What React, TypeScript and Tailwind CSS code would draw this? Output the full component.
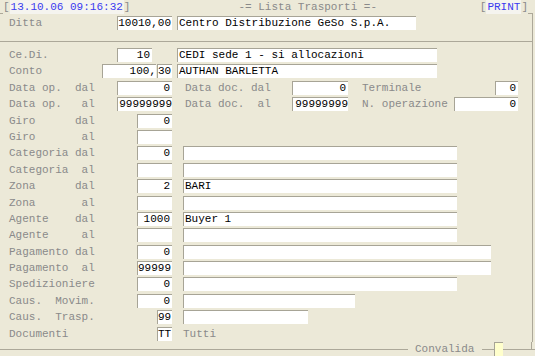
import { ReactNode } from 'react';

interface BoxProps {
  className: string;
  children?: ReactNode;
}

// white entry field with sunken top/left edge
function Box({ className, children }: BoxProps) {
  return (
    <div
      className={
        'h-[14px] shrink-0 bg-white border-t border-l border-[#a7a496] leading-[13px] whitespace-pre overflow-hidden text-black ' +
        className
      }
    >
      {children}
    </div>
  );
}

function Label({ className, children }: BoxProps) {
  return (
    <span className={'shrink-0 whitespace-pre leading-[14px] text-[#8a8a8a] ' + className}>
      {children}
    </span>
  );
}

function Row({ children }: { children: ReactNode }) {
  return <div className="flex items-start h-[16.4px] pl-[9px]">{children}</div>;
}

export default function App() {
  return (
    <div className="w-[535px] h-[356px] bg-[#ece9d8] font-['Liberation_Mono','Courier_New',monospace] text-[11px] flex flex-col overflow-hidden">
      {/* top bar */}
      <div className="w-[533px] h-[14px] flex items-start leading-[14px]">
        <div className="w-[3px] h-px bg-[#aca899] self-end" />
        <span className="text-[#8a8a8a]">[</span>
        <span className="bg-[#f5f4ef] text-[#3a3af0] px-[1px]">13.10.06 09:16:32</span>
        <span className="text-[#8a8a8a]">]</span>
        <span className="ml-[108px] whitespace-pre text-[#8a8a8a]">-= Lista Trasporti =-</span>
        <span className="ml-auto text-[#8a8a8a]">[</span>
        <span className="bg-[#f5f4ef] text-[#3a3af0] px-[1px]">PRINT</span>
        <span className="text-[#8a8a8a]">]</span>
        <div className="w-[5px] h-px bg-[#aca899] self-end" />
      </div>

      <div className="w-[533px] h-[328px] border-r border-[#aca899] flex flex-col">
        <div className="flex items-start mt-[2px] pl-[9px]">
          <Label className="w-[108px]">Ditta</Label>
          <Box className="w-[55px] text-right pr-[1px]">10010,00</Box>
          <Box className="ml-[5px] w-[239px] pl-[1px]">Centro Distribuzione GeSo S.p.A.</Box>
        </div>

        <div className="mt-[11px] h-[2px] border-t border-[#aca899] bg-white" />

        <div className="mt-[6px] flex flex-col">
          <Row>
            <Label className="w-[108px]">Ce.Di.</Label>
            <Box className="w-[35px] text-right pr-[2px]">10</Box>
            <Box className="ml-[25px] w-[260px] pl-[1px]">CEDI sede 1 - si allocazioni</Box>
          </Row>
          <Row>
            <Label className="w-[93px]">Conto</Label>
            <Box className="w-[54px] text-right pr-0">100,</Box>
            <Box className="ml-[1px] w-[15px] pl-0">30</Box>
            <Box className="ml-[5px] w-[260px] pl-[1px]">AUTHAN BARLETTA</Box>
          </Row>
          <Row>
            <Label className="w-[108px]">Data op.  dal</Label>
            <Box className="w-[55px] text-right pr-[2px]">0</Box>
            <Label className="ml-[13px] w-[107px]">Data doc. dal</Label>
            <Box className="w-[56px] text-right pr-[2px]">0</Box>
            <Label className="ml-[14px] w-[133px]">Terminale</Label>
            <Box className="w-[23px] text-right pr-[2px]">0</Box>
          </Row>
          <Row>
            <Label className="w-[108px]">Data op.   al</Label>
            <Box className="w-[55px] text-right pr-0">99999999</Box>
            <Label className="ml-[13px] w-[107px]">Data doc.  al</Label>
            <Box className="w-[56px] text-right pr-0">99999999</Box>
            <Label className="ml-[14px] w-[92px]">N. operazione</Label>
            <Box className="w-[64px] text-right pr-[2px]">0</Box>
          </Row>
          <Row>
            <Label className="w-[128px]">Giro      dal</Label>
            <Box className="w-[35px] text-right pr-[2px]">0</Box>
          </Row>
          <Row>
            <Label className="w-[128px]">Giro       al</Label>
            <Box className="w-[35px]" />
          </Row>
          <Row>
            <Label className="w-[128px]">Categoria dal</Label>
            <Box className="w-[35px] text-right pr-[2px]">0</Box>
            <Box className="ml-[11px] w-[274px]" />
          </Row>
          <Row>
            <Label className="w-[128px]">Categoria  al</Label>
            <Box className="w-[35px]" />
            <Box className="ml-[11px] w-[274px]" />
          </Row>
          <Row>
            <Label className="w-[128px]">Zona      dal</Label>
            <Box className="w-[35px] text-right pr-[2px]">2</Box>
            <Box className="ml-[11px] w-[274px] pl-[1px]">BARI</Box>
          </Row>
          <Row>
            <Label className="w-[128px]">Zona       al</Label>
            <Box className="w-[35px]" />
            <Box className="ml-[11px] w-[274px]" />
          </Row>
          <Row>
            <Label className="w-[128px]">Agente    dal</Label>
            <Box className="w-[35px] text-right pr-[2px]">1000</Box>
            <Box className="ml-[11px] w-[274px] pl-[1px]">Buyer 1</Box>
          </Row>
          <Row>
            <Label className="w-[128px]">Agente     al</Label>
            <Box className="w-[35px]" />
            <Box className="ml-[11px] w-[274px]" />
          </Row>
          <Row>
            <Label className="w-[128px]">Pagamento dal</Label>
            <Box className="w-[35px] text-right pr-[2px]">0</Box>
            <Box className="ml-[11px] w-[308px]" />
          </Row>
          <Row>
            <Label className="w-[128px]">Pagamento  al</Label>
            <Box className="w-[35px] text-right pr-[1px]">99999</Box>
            <Box className="ml-[11px] w-[308px]" />
          </Row>
          <Row>
            <Label className="w-[128px]">Spedizioniere</Label>
            <Box className="w-[35px] text-right pr-[2px]">0</Box>
            <Box className="ml-[11px] w-[274px]" />
          </Row>
          <Row>
            <Label className="w-[128px]">Caus.  Movim.</Label>
            <Box className="w-[35px] text-right pr-[2px]">0</Box>
            <Box className="ml-[11px] w-[172px]" />
          </Row>
          <Row>
            <Label className="w-[148px]">Caus.  Trasp.</Label>
            <Box className="w-[15px] text-right pr-[1px]">99</Box>
            <Box className="ml-[11px] w-[125px]" />
          </Row>
          <Row>
            <Label className="w-[148px]">Documenti</Label>
            <Box className="w-[15px] text-right pr-[1px]">TT</Box>
            <Label className="ml-[11px]">Tutti</Label>
          </Row>
        </div>
      </div>

      {/* bottom frame edge with Convalida legend */}
      <div className="w-[535px] h-[14px] flex items-start">
        <div className="w-[408px] h-[8px] border-b border-[#aca899]" />
        <span className="ml-[7px] leading-[14px] text-[#8a8a8a]">Convalida</span>
        <div className="ml-[8px] w-[12px] h-[8px] border-b border-[#aca899]" />
        <div className="w-[9px] h-[14px] bg-[#ffffcc] border-t border-l border-[#a7a496]" />
        <div className="w-[29px] h-[8px] border-b border-r border-[#aca899]" />
        <div className="flex-1 h-[8px] border-b border-[#aca899]" />
      </div>
    </div>
  );
}
